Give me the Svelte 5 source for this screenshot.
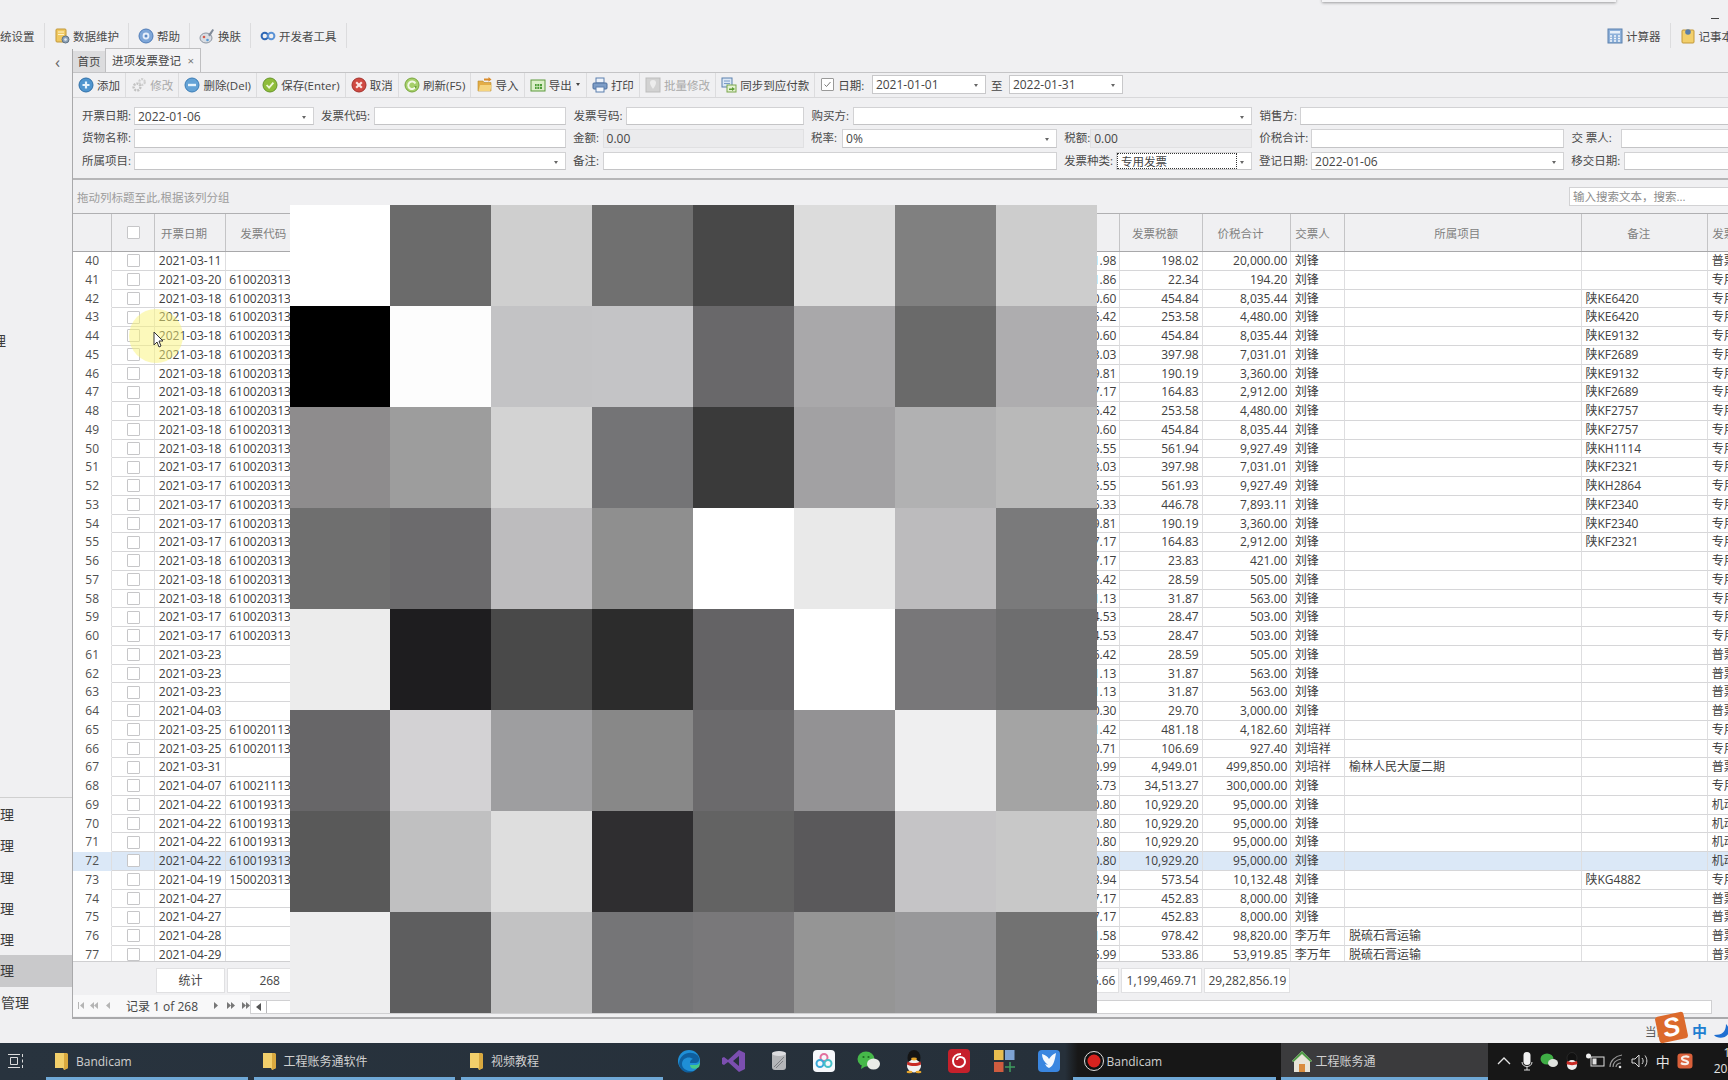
<script>
  const menuLeft = [
    { icon: 'db', label: '数据维护' },
    { icon: 'help', label: '帮助' },
    { icon: 'skin', label: '换肤' },
    { icon: 'dev', label: '开发者工具' }
  ];

  const tools = [
    { icon: 'add', label: '添加' },
    { icon: 'edit', label: '修改', off: true },
    { icon: 'del', label: '删除(Del)' },
    { icon: 'save', label: '保存(Enter)' },
    { icon: 'cancel', label: '取消' },
    { icon: 'refresh', label: '刷新(F5)' },
    { icon: 'import', label: '导入' },
    { icon: 'export', label: '导出', drop: true },
    { icon: 'print', label: '打印' },
    { icon: 'batch', label: '批量修改', off: true },
    { icon: 'sync', label: '同步到应付款' }
  ];

  // label width, input width, value, flags
  const formRows = [
    [
      { label: '开票日期:', lw: 52, w: 179.5, value: '2022-01-06', caret: true },
      { label: '发票代码:', lw: 52.5, w: 192.5 },
      { label: '发票号码:', lw: 52.4, w: 178 },
      { label: '购买方:', lw: 42, w: 398.5, caret: true },
      { label: '销售方:', lw: 41, w: 500 }
    ],
    [
      { label: '货物名称:', lw: 52, w: 431.5 },
      { label: '金额:', lw: 29.6, w: 201, value: '0.00', off: true },
      { label: '税率:', lw: 31, w: 214.6, value: '0%', caret: true },
      { label: '税额:', lw: 26, w: 161.5, value: '0.00', off: true },
      { label: '价税合计:', lw: 52, w: 252.7 },
      { label: '交 票人:', lw: 49.5, w: 200 }
    ],
    [
      { label: '所属项目:', lw: 52, w: 431.5, caret: true },
      { label: '备注:', lw: 29.6, w: 454 },
      { label: '发票种类:', lw: 52, w: 135.5, value: '专用发票', caret: true, focus: true },
      { label: '登记日期:', lw: 52, w: 252.7, value: '2022-01-06', caret: true },
      { label: '移交日期:', lw: 52.5, w: 200 }
    ]
  ];

  const C = '610020313';
  const LF = '刘锋';
  const LP = '刘培祥';
  const LW = '李万年';
  const ZY = '专用发票';
  const PP = '普票';
  const JD = '机动车票';
  // date, code, tax, total, person, project, note, kind, (amount when rounding differs)
  const rows = [
    ['03-11', '', '198.02', '20,000.00', LF, '', '', PP],
    ['03-20', C, '22.34', '194.20', LF, '', '', ZY],
    ['03-18', C, '454.84', '8,035.44', LF, '', '陕KE6420', ZY],
    ['03-18', C, '253.58', '4,480.00', LF, '', '陕KE6420', ZY],
    ['03-18', C, '454.84', '8,035.44', LF, '', '陕KE9132', ZY],
    ['03-18', C, '397.98', '7,031.01', LF, '', '陕KF2689', ZY],
    ['03-18', C, '190.19', '3,360.00', LF, '', '陕KE9132', ZY],
    ['03-18', C, '164.83', '2,912.00', LF, '', '陕KF2689', ZY],
    ['03-18', C, '253.58', '4,480.00', LF, '', '陕KF2757', ZY],
    ['03-18', C, '454.84', '8,035.44', LF, '', '陕KF2757', ZY],
    ['03-18', C, '561.94', '9,927.49', LF, '', '陕KH1114', ZY],
    ['03-17', C, '397.98', '7,031.01', LF, '', '陕KF2321', ZY],
    ['03-17', C, '561.93', '9,927.49', LF, '', '陕KH2864', ZY, '9,365.55'],
    ['03-17', C, '446.78', '7,893.11', LF, '', '陕KF2340', ZY],
    ['03-17', C, '190.19', '3,360.00', LF, '', '陕KF2340', ZY],
    ['03-17', C, '164.83', '2,912.00', LF, '', '陕KF2321', ZY],
    ['03-18', C, '23.83', '421.00', LF, '', '', ZY],
    ['03-18', C, '28.59', '505.00', LF, '', '', ZY, '476.42'],
    ['03-18', C, '31.87', '563.00', LF, '', '', ZY],
    ['03-17', C, '28.47', '503.00', LF, '', '', ZY],
    ['03-17', C, '28.47', '503.00', LF, '', '', ZY],
    ['03-23', '', '28.59', '505.00', LF, '', '', PP, '476.42'],
    ['03-23', '', '31.87', '563.00', LF, '', '', PP],
    ['03-23', '', '31.87', '563.00', LF, '', '', PP],
    ['04-03', '', '29.70', '3,000.00', LF, '', '', PP],
    ['03-25', '610020113', '481.18', '4,182.60', LP, '', '', ZY],
    ['03-25', '610020113', '106.69', '927.40', LP, '', '', ZY],
    ['03-31', '', '4,949.01', '499,850.00', LP, '榆林人民大厦二期', '', PP],
    ['04-07', '610021113', '34,513.27', '300,000.00', LF, '', '', ZY],
    ['04-22', '610019313', '10,929.20', '95,000.00', LF, '', '', JD],
    ['04-22', '610019313', '10,929.20', '95,000.00', LF, '', '', JD],
    ['04-22', '610019313', '10,929.20', '95,000.00', LF, '', '', JD],
    ['04-22', '610019313', '10,929.20', '95,000.00', LF, '', '', JD],
    ['04-19', '150020313', '573.54', '10,132.48', LF, '', '陕KG4882', ZY],
    ['04-27', '', '452.83', '8,000.00', LF, '', '', PP],
    ['04-27', '', '452.83', '8,000.00', LF, '', '', PP],
    ['04-28', '', '978.42', '98,820.00', LW, '脱硫石膏运输', '', PP],
    ['04-29', '', '533.86', '53,919.85', LW, '脱硫石膏运输', '', PP]
  ];

  // 金额 = 价税合计 - 税额
  const num = (s) => Number(s.replace(/,/g, ''));
  const amount = (r) =>
    r[8] ?? (num(r[3]) - num(r[2])).toLocaleString('en-US', { minimumFractionDigits: 2, maximumFractionDigits: 2 });

  const mosaic = [
    '#fff', '#6b6b6b', '#cfcfcf', '#707070', '#484848', '#dcdcdc', '#808080', '#cdcdcd',
    '#000', '#fdfdfd', '#c3c3c5', '#c4c4c6', '#69686a', '#a9a8aa', '#6a6a6a', '#aeadaf',
    '#8e8c8d', '#9d9d9d', '#d3d3d3', '#747476', '#3a3a3a', '#a2a1a3', '#b1b1b2', '#b9b9b9',
    '#6f6f6f', '#6c6b6d', '#bdbcbe', '#8f8f8f', '#fff', '#e9e9e9', '#bcbbbd', '#7a7a7b',
    '#ececec', '#1e1d1f', '#494949', '#2c2c2c', '#646365', '#fff', '#787779', '#6e6e6f',
    '#676668', '#d3d2d4', '#9e9ea0', '#888888', '#6b6a6c', '#939294', '#efeff0', '#a4a4a4',
    '#595959', '#c0c0c1', '#dedede', '#2f2e30', '#636363', '#5a595b', '#c5c4c6', '#c8c8c8',
    '#eeeeef', '#5e5e5f', '#c2c2c3', '#757577', '#79787a', '#959595', '#98989a', '#727272'
  ];

  const sideItems = ['理', '理', '理', '理', '理', '理'];
  const pins = ['edge', 'vs', 'dbs', 'baidu', 'wechat', 'qq', 'netease', 'tiles', 'bird'];
  const tray = ['up', 'mic', 'wechat', 'qq', 'screen', 'wifi', 'sound', 'zh', 'sogou'];
</script>

{#snippet folder()}
  <svg width="15" height="20" viewBox="0 0 15 20">
    <path d="M1 2h11l2 1v14l-4 2-1-2H1z" fill="#f2cf6b" />
    <path d="M10 2h2l2 1v14l-4 2z" fill="#d9a93f" />
  </svg>
{/snippet}

{#snippet icon(name)}
  <svg class="ico" width="16" height="16" viewBox="0 0 16 16">
    {#if name === 'add'}
      <circle cx="8" cy="8" r="7" fill="#4f95cf" stroke="#2f6fa8" />
      <path d="M4.5 8h7M8 4.5v7" stroke="#e6f3fc" stroke-width="2.2" />
    {:else if name === 'edit'}
      <circle cx="6" cy="10" r="3.4" fill="none" stroke="#c2c2c2" stroke-width="2.4" stroke-dasharray="2 1" />
      <circle cx="11" cy="5" r="2.8" fill="none" stroke="#cfcfcf" stroke-width="2.2" stroke-dasharray="2 1" />
    {:else if name === 'del'}
      <circle cx="8" cy="8" r="7" fill="#63a2d6" stroke="#3b7cb5" />
      <path d="M4 8h8" stroke="#e6f3fc" stroke-width="2.4" />
    {:else if name === 'save'}
      <circle cx="8" cy="8" r="7" fill="#8fbd3a" stroke="#66952a" />
      <path d="M4.6 8l2.5 2.6 4.3-5" fill="none" stroke="#eef7d8" stroke-width="1.8" />
    {:else if name === 'cancel'}
      <circle cx="8" cy="8" r="7" fill="#cf4a42" stroke="#a3302b" />
      <path d="M5.2 5.2l5.6 5.6M10.8 5.2l-5.6 5.6" stroke="#fbe6e3" stroke-width="2.2" />
    {:else if name === 'refresh'}
      <circle cx="8" cy="8" r="7" fill="#a6cf6a" stroke="#78a63c" />
      <path d="M11.4 6.4A3.8 3.8 0 1 0 11.6 9.6" fill="none" stroke="#f3f9e6" stroke-width="2" />
      <path d="M12.8 9.4l-2.8-.6 1.8 3z" fill="#5f9a2c" />
    {:else if name === 'import'}
      <path d="M1 4h5l1 1.5h7v8.5H1z" fill="#e3ad47" stroke="#b98a2e" stroke-width=".6" />
      <path d="M1.5 14l1.6-6h11.6l-1.4 6z" fill="#f5d47f" />
      <path d="M7 1.4h4.5V0l3 2.4-3 2.4V3.4H7z" fill="#d98b2b" />
    {:else if name === 'export'}
      <rect x="1" y="3" width="14" height="11" fill="#dcefc9" stroke="#5c9a3d" />
      <rect x="5" y="7" width="7" height="5" fill="#4c9c37" />
      <path d="M7 7v5M9.5 7v5M5 9.5h7" stroke="#dcefc9" stroke-width=".7" />
    {:else if name === 'print'}
      <rect x="4" y="1" width="8" height="5" fill="#eef3fa" stroke="#5b7fae" />
      <rect x="1" y="6" width="14" height="6" rx="1" fill="#7d9dc7" stroke="#4c6e9e" />
      <rect x="4" y="10" width="8" height="5" fill="#f4f7fc" stroke="#5b7fae" />
    {:else if name === 'batch'}
      <rect x="1" y="1" width="14" height="14" fill="#d2d2d2" stroke="#bdbdbd" />
      <path d="M8 3a3 3 0 0 1 3 3c0 2-3 6-3 6S5 8 5 6a3 3 0 0 1 3-3z" fill="#ececec" />
    {:else if name === 'sync'}
      <rect x="1" y="1" width="10" height="9" fill="#dbe7f5" stroke="#5b80ad" />
      <path d="M3 4h6M3 6.500h6" stroke="#7a9cc7" />
      <rect x="6" y="8" width="9" height="7" fill="#e5f2d3" stroke="#7aa64d" />
      <path d="M8 11.500h3V10l3 2-3 2v-1H8z" fill="#5d9c34" />
    {:else if name === 'db'}
      <rect x="2" y="1" width="10" height="13" rx="1" fill="#f0c860" stroke="#c2983a" />
      <path d="M4 4h6M4 6.500h6" stroke="#fff3c9" />
      <circle cx="11.500" cy="11.500" r="3.500" fill="#8fa3b8" stroke="#5e7285" />
      <circle cx="11.500" cy="11.500" r="1.300" fill="#e6edf4" />
    {:else if name === 'help'}
      <circle cx="8" cy="8" r="7" fill="#7ea6d8" stroke="#4f7cb8" />
      <circle cx="8" cy="8" r="3.400" fill="#e6eefa" />
      <circle cx="8" cy="8" r="1.500" fill="#5a88c4" />
    {:else if name === 'skin'}
      <ellipse cx="7" cy="10" rx="6" ry="5" fill="#d9dde3" stroke="#8a93a0" />
      <circle cx="5" cy="9" r="1.300" fill="#d65a4a" />
      <circle cx="8.500" cy="12" r="1.300" fill="#5a9bd6" />
      <path d="M9 7l4.500-6 1.500 1-4 6.500z" fill="#7f8a99" />
    {:else if name === 'dev'}
      <circle cx="4.800" cy="8" r="3.200" fill="none" stroke="#2f68b5" stroke-width="2" />
      <circle cx="11.200" cy="8" r="3.200" fill="none" stroke="#5b93d6" stroke-width="2" />
    {:else if name === 'calc'}
      <rect x="1" y="1" width="14" height="14" fill="#8eb1da" stroke="#5b80ad" />
      <rect x="3" y="3" width="10" height="2.500" fill="#e6eff9" />
      <path d="M3 8h2M7 8h2M11 8h2M3 10.500h2M7 10.500h2M11 10.500h2M3 13h2M7 13h2M11 13h2" stroke="#f3f7fc" stroke-width="1.400" />
    {:else if name === 'note'}
      <rect x="2" y="2" width="12" height="13" rx="1" fill="#f2cf6b" stroke="#c2983a" />
      <circle cx="8" cy="4" r="2.800" fill="#5a7ea8" />
    {/if}
  </svg>
{/snippet}

{#snippet app(name)}
  <svg width="26" height="26" viewBox="0 0 26 26">
    {#if name === 'edge'}
      <circle cx="13" cy="13" r="11" fill="#1f8fd6" />
      <path d="M3 15C4 6 14 2 21 7c3 2 3 8-1 8h-6c0-3 2-4 3-4-3-3-11-2-11 5 0 5 6 8 12 7-6 4-15 0-15-8z" fill="#0f5f9e" />
      <path d="M24 12c0 4-2 5-5 5h-5c0 4 5 5 9 2 1-2 1-5 1-7z" fill="#45c98b" />
    {:else if name === 'vs'}
      <path d="M18 2l6 3v16l-6 3-11-10-4 3-2-1V10l2-1 4 3zM18 8l-6 5 6 5z" fill="#7c4fb0" />
    {:else if name === 'dbs'}
      <rect x="6" y="4" width="14" height="18" rx="3" fill="#b4b6b9" />
      <ellipse cx="13" cy="5.500" rx="7" ry="2.500" fill="#dcdde0" />
      <path d="M8 19l10-10M10 20l7-7" stroke="#7d7f83" />
    {:else if name === 'baidu'}
      <rect x="2" y="2" width="22" height="22" rx="4" fill="#f6f8fb" />
      <circle cx="13" cy="9.500" r="3.500" fill="none" stroke="#e3719f" stroke-width="2" />
      <circle cx="9" cy="15.500" r="3.500" fill="none" stroke="#3ba9d9" stroke-width="2" />
      <circle cx="17" cy="15.500" r="3.500" fill="none" stroke="#47c1c9" stroke-width="2" />
    {:else if name === 'wechat'}
      <ellipse cx="10" cy="11" rx="8.500" ry="7.500" fill="#46b84a" />
      <path d="M6 16l-1 5 5-3z" fill="#46b84a" />
      <ellipse cx="17.500" cy="16" rx="6.500" ry="5.500" fill="#e9ece8" />
      <circle cx="7.500" cy="9" r="1.100" fill="#1d6b22" />
      <circle cx="12.500" cy="9" r="1.100" fill="#1d6b22" />
    {:else if name === 'qq'}
      <ellipse cx="13" cy="10" rx="6.500" ry="8" fill="#141414" />
      <ellipse cx="13" cy="18" rx="7" ry="6.500" fill="#f2f2f2" />
      <path d="M6.500 13.500c4 2 9 2 13 0l.5 3c-4 2-10 2-14 0z" fill="#c92b25" />
      <ellipse cx="13" cy="11" rx="3" ry="1.400" fill="#e8a62b" />
      <ellipse cx="8.500" cy="24" rx="3" ry="1.200" fill="#e8a62b" />
      <ellipse cx="17.500" cy="24" rx="3" ry="1.200" fill="#e8a62b" />
    {:else if name === 'netease'}
      <rect x="2" y="1" width="22" height="24" rx="4" fill="#c6202b" />
      <path d="M15 6c-5 0-8 3-8 7 0 4 3 6 6 6s6-2 6-5-2-5-5-5c-2 0-3 2-3 3" fill="none" stroke="#fff" stroke-width="2" />
    {:else if name === 'tiles'}
      <rect x="3" y="2" width="9.500" height="10" fill="#e9bd4f" />
      <rect x="14" y="2" width="9.500" height="10" fill="#7ea3d3" />
      <rect x="3" y="14" width="9.500" height="10" fill="#cf5c3f" />
      <path d="M19 14v10M14 19h10" stroke="#3f9c5f" stroke-width="1.500" />
    {:else if name === 'bird'}
      <rect x="2" y="2" width="22" height="22" rx="4" fill="#3a86e0" />
      <path d="M6 6c4 1 6 3 7 5 2-3 4-5 7-6-1 6-2 13-7 15-2-1-3-2-4-4l3 1C8 14 6 10 6 6z" fill="#f4f8fd" />
    {/if}
  </svg>
{/snippet}

{#snippet trayIcon(name)}
  {#if name === 'zh'}
    <span class="tray-zh">中</span>
  {:else}
    <svg width="20" height="20" viewBox="0 0 20 20">
      {#if name === 'up'}
        <path d="M4 13l6-6 6 6" fill="none" stroke="#e4e4e4" stroke-width="1.300" />
      {:else if name === 'mic'}
        <rect x="6.500" y="1" width="7" height="13" rx="3.500" fill="#f0f0f0" />
        <path d="M5 11c0 6 10 6 10 0M10 16v3M7 19h6" fill="none" stroke="#e0e0e0" />
      {:else if name === 'wechat'}
        <ellipse cx="8" cy="8" rx="6.500" ry="5.500" fill="#3fae45" />
        <ellipse cx="14" cy="12" rx="5" ry="4" fill="#dfe2de" />
      {:else if name === 'qq'}
        <ellipse cx="10" cy="7" rx="5" ry="5.500" fill="#111" stroke="#444" stroke-width=".4" />
        <ellipse cx="10" cy="14" rx="5" ry="5" fill="#eee" />
        <path d="M5 10c3 1.500 7 1.500 10 0l.5 3c-3 1.500-8 1.500-11 0z" fill="#c92b25" />
      {:else if name === 'screen'}
        <rect x="6" y="6" width="13" height="9" fill="none" stroke="#e0e0e0" />
        <rect x="7.500" y="7.500" width="4" height="6" fill="#e0e0e0" />
        <circle cx="3.500" cy="5" r="2.500" fill="#f0f0f0" />
      {:else if name === 'wifi'}
        <path d="M3 16C3 10 8 5 15 4M6 16c0-4 3-7 8-8M9 16c0-2 2-4 5-4" fill="none" stroke="#9a9a9a" stroke-width="1.200" />
        <circle cx="13" cy="16" r="1.300" fill="#e0e0e0" />
      {:else if name === 'sound'}
        <path d="M2 8h3l4-4v12l-4-4H2z" fill="none" stroke="#dcdcdc" />
        <path d="M12 7c1.500 2 1.500 4 0 6M15 4.500c2.500 3.500 2.500 7.500 0 11" fill="none" stroke="#dcdcdc" />
      {:else if name === 'sogou'}
        <rect x="2.500" y="2.500" width="15" height="15" rx="3" fill="#d9603a" />
        <path d="M14 6.500c-1-1.500-7-1.500-7 1 0 2.500 6 1.500 6 4 0 2-5 2-7 .5" fill="none" stroke="#f7efe9" stroke-width="2.200" />
      {/if}
    </svg>
  {/if}
{/snippet}

<div class="screen">
  <div class="menubar">
    <span class="menu-item clipped">统设置</span>
    {#each menuLeft as m}
      <span class="menu-item">{@render icon(m.icon)}{m.label}</span>
    {/each}
    <span class="menu-spacer"></span>
    <span class="menu-item">{@render icon('calc')}计算器</span>
    <span class="menu-item last">{@render icon('note')}记事本</span>
  </div>

  <div class="body">
    <aside class="sidebar">
      <div class="collapse">‹</div>
      <div class="side-stray">理</div>
      <div class="side-list">
        {#each sideItems as s, i}
          <div class="side-item" class:active={i === 5}>{s}</div>
        {/each}
        <div class="side-item wide">管理</div>
      </div>
    </aside>

    <section class="panel">
      <div class="tabs">
        <span class="tab">首页</span>
        <span class="tab on">进项发票登记<i>×</i></span>
      </div>

      <div class="toolbar">
        {#each tools as t}
          <span class="tool" class:off={t.off}>
            {@render icon(t.icon)}{t.label}{#if t.drop}<b class="drop"></b>{/if}
          </span>
        {/each}
        <span class="date-filter">
          <span class="check small"><svg width="11" height="11" viewBox="0 0 11 11"><path d="M2.500 5.500l2 2 4-4.500" fill="none" stroke="#777" /></svg></span>
          <span class="date-label">日期:</span>
          <span class="date-box">2021-01-01<b class="caret"></b></span>
          <span class="date-to">至</span>
          <span class="date-box">2022-01-31<b class="caret"></b></span>
        </span>
      </div>

      <div class="form">
        {#each formRows as row}
          <div class="form-row">
            {#each row as f}
              <div class="field">
                <span class="field-label" style="width:{f.lw}px">{f.label}</span>
                <span class="field-input" class:off={f.off} style="width:{f.w}px">
                  {#if f.focus}
                    <span class="focus">{f.value}</span>
                  {:else}
                    {f.value ?? ''}
                  {/if}
                  {#if f.caret}<b class="caret"></b>{/if}
                </span>
              </div>
            {/each}
          </div>
        {/each}
      </div>

      <div class="group-bar">
        <span>拖动列标题至此,根据该列分组</span>
        <span class="search">输入搜索文本，搜索...</span>
      </div>

      <div class="grid-row head">
        <span class="c"></span>
        <span class="c chk"><span class="check"></span></span>
        <span class="c">开票日期</span>
        <span class="c">发票代码</span>
        <span class="c"></span>
        <span class="c">发票税额</span>
        <span class="c">价税合计</span>
        <span class="c left">交票人</span>
        <span class="c">所属项目</span>
        <span class="c">备注</span>
        <span class="c left">发票种类</span>
      </div>

      <div class="rows">
        {#each rows as r, i}
          <div class="grid-row line" class:picked={i + 40 === 72}>
            <span class="c no">{i + 40}</span>
            <span class="c chk"><span class="check"></span></span>
            <span class="c">2021-{r[0]}</span>
            <span class="c">{r[1] ? r[1] + '0' : ''}</span>
            <span class="c r">{amount(r)}</span>
            <span class="c r">{r[2]}</span>
            <span class="c r">{r[3]}</span>
            <span class="c">{r[4]}</span>
            <span class="c">{r[5]}</span>
            <span class="c">{r[6]}</span>
            <span class="c">{r[7]}</span>
          </div>
        {/each}
      </div>

      <div class="grid-row totals">
        <span></span>
        <span></span>
        <span class="t mid">统计</span>
        <span class="t mid">268</span>
        <span class="t r">28,083,386.66</span>
        <span class="t r">1,199,469.71</span>
        <span class="t r">29,282,856.19</span>
      </div>

      <div class="nav">
        <div class="pager">
          <span class="arrows">
            <svg width="46" height="9" viewBox="0 0 46 9" fill="#b5b5b5">
              <path d="M0 1h1v7H0zM6 1v7L2 4.500zM16 1v7l-4-3.500zM20 1v7l-4-3.500zM32 1v7l-4-3.500z" />
            </svg>
          </span>
          <span class="rec">记录 1 of 268</span>
          <span class="arrows right">
            <svg width="40" height="9" viewBox="0 0 40 9" fill="#777">
              <path d="M0 1v7l4-3.500zM13 1v7l4-3.500zM17 1v7l4-3.500zM28 1v7l4-3.500zM32 1v7l4-3.500zM37 1h1v7h-1z" />
            </svg>
          </span>
        </div>
        <div class="hscroll">
          <span class="hbtn"><svg width="6" height="8" viewBox="0 0 6 8"><path d="M5 0v8L0 4z" fill="#555" /></svg></span>
        </div>
      </div>
    </section>
  </div>

  <div class="status">
    <span class="status-text">当前</span>
    <span class="ime-zh">中</span>
    <svg class="moon" width="16" height="16" viewBox="0 0 16 16"><path d="M13 1c0 8-4 11-12 11 3 4 13 4 15-3 .5-3-1-6-3-8z" fill="#1f6fd1" /></svg>
  </div>

  <div class="taskbar">
    <span class="start">
      <svg width="16" height="16" viewBox="0 0 16 16" fill="none" stroke="#dcdcdc">
        <path d="M2.500 4.500h7v7h-7zM0 1.500h12M0 14.500h12M14.500 1v3M14.500 6.500v3M14.500 12v3" />
      </svg>
    </span>
    <span class="task">{@render folder()}<em>Bandicam</em></span>
    <span class="task">{@render folder()}<em>工程账务通软件</em></span>
    <span class="task">{@render folder()}<em>视频教程</em></span>
    <span class="pins">
      {#each pins as p}
        <span class="pin">{@render app(p)}</span>
      {/each}
    </span>
    <span class="task rec-task">
      <svg width="22" height="22" viewBox="0 0 22 22"><circle cx="11" cy="11" r="9.500" fill="#111" stroke="#ddd" /><circle cx="11" cy="11" r="6.500" fill="#d8231f" /></svg>
      <em>Bandicam</em>
    </span>
    <span class="task cur-task">
      <svg width="22" height="24" viewBox="0 0 22 24">
        <path d="M1 12L11 2l10 10-2 1v10H3V13z" fill="#e8e4d8" />
        <path d="M1 12L11 2l10 10-1.500 1L11 5 2.500 13z" fill="#4f9c46" />
        <rect x="8" y="15" width="6" height="8" fill="#d98b3d" />
      </svg>
      <em>工程账务通</em>
    </span>
    <span class="tray">
      {#each tray as t}
        <span class="tray-item">{@render trayIcon(t)}</span>
      {/each}
    </span>
    <span class="clock"><span>10:49</span><span>2022/1/6</span></span>
  </div>

  <div class="top-popup"></div>
  <div class="minimize"></div>

  <div class="mosaic">
    {#each mosaic as m}
      <span style="background:{m}"></span>
    {/each}
  </div>

  <div class="cursor-glow"></div>
  <svg class="cursor" width="11" height="17" viewBox="0 0 11 17">
    <path d="M1 1v13l3-3 2 5 2-1-2-5h4z" fill="#fff" stroke="#333" />
  </svg>

  <div class="sogou">S</div>
</div>

<style>
  :global(body) {
    margin: 0;
    background: #f0f0f2;
  }

  .screen {
    position: relative;
    width: 1728px;
    height: 1080px;
    overflow: hidden;
    display: flex;
    flex-direction: column;
    background: #f0f0f2;
    color: #454545;
    font: 11.5px "Open Sans", "Noto Sans CJK SC", sans-serif;
  }

  /* top menu */
  .menubar {
    height: 49px;
    box-sizing: border-box;
    padding-top: 23px;
    display: flex;
    flex: none;
    align-items: flex-start;
  }

  .menu-item {
    display: flex;
    align-items: center;
    gap: 3px;
    height: 25px;
    padding: 0 9px;
    border-right: 1px solid #dcdcde;
    white-space: nowrap;
    color: #4a4a4a;
  }

  .menu-item.clipped {
    padding: 0 9.500px 0 0;
  }

  .menu-item.last {
    border-right: 0;
    margin-right: -14px;
  }

  .menu-spacer {
    flex: 1;
  }

  .ico {
    flex: none;
  }

  .body {
    flex: 1;
    min-height: 0;
    display: flex;
  }

  /* left nav */
  .sidebar {
    width: 72px;
    flex: none;
    overflow: hidden;
    font-size: 14px;
    color: #3c3c3c;
  }

  .collapse {
    height: 26px;
    line-height: 26px;
    text-align: right;
    padding-right: 12px;
    font-size: 17px;
    color: #666;
  }

  .side-stray {
    margin-top: 256px;
    height: 20px;
    line-height: 20px;
    margin-left: -8px;
  }

  .side-list {
    margin-top: 446px;
    border-top: 1px solid #d0d0d0;
    padding-top: 1px;
  }

  .side-item {
    height: 31.300px;
    line-height: 31.300px;
  }

  .side-item.active {
    background: #c9c9cb;
  }

  .side-item.wide {
    padding-left: 1px;
  }

  /* main panel */
  .panel {
    flex: 1;
    min-width: 0;
    display: flex;
    flex-direction: column;
    border-left: 1px solid #a9a9ab;
    border-bottom: 2px solid #a9a9ab;
  }

  .tabs {
    height: 24px;
    flex: none;
    display: flex;
    align-items: flex-end;
    box-sizing: border-box;
    border-bottom: 1px solid #c4c4c6;
  }

  .tab {
    height: 21px;
    line-height: 21px;
    padding: 0 4.500px;
    background: #dcdcde;
    color: #444;
    white-space: nowrap;
  }

  .tab.on {
    height: 24px;
    line-height: 24px;
    width: 96px;
    padding: 0 6px;
    box-sizing: border-box;
    background: #f3f3f5;
    border: 1px solid #bfbfc1;
    border-bottom: 0;
    display: flex;
    justify-content: space-between;
  }

  .tab.on i {
    font-style: normal;
    color: #777;
  }

  .toolbar {
    height: 24.500px;
    flex: none;
    box-sizing: border-box;
    display: flex;
    align-items: center;
    border-bottom: 1px solid #d8d8da;
  }

  .tool {
    display: flex;
    align-items: center;
    gap: 3px;
    height: 100%;
    padding: 0 5.100px;
    border-right: 1px solid #dcdcde;
    white-space: nowrap;
  }

  .tool.off {
    color: #a9a9a9;
  }

  .drop {
    width: 0;
    height: 0;
    margin: 0 1px 0 1px;
    border: 2.500px solid transparent;
    border-top: 3px solid #444;
    border-bottom: 0;
  }

  .date-filter {
    display: flex;
    align-items: center;
    margin-left: 6px;
  }

  .date-label {
    margin: 0 7.500px 0 4px;
  }

  .date-box {
    position: relative;
    width: 114px;
    height: 19px;
    line-height: 18px;
    box-sizing: border-box;
    padding-left: 3px;
    background: #fff;
    border: 1px solid #c8c8ca;
    font-size: 12px;
  }

  .date-to {
    margin: 0 5px;
    width: 13px;
  }

  .caret {
    position: absolute;
    right: 7px;
    top: 8px;
    width: 0;
    height: 0;
    border: 2px solid transparent;
    border-top: 3px solid #666;
    border-bottom: 0;
  }

  /* edit form */
  .form {
    height: 82.500px;
    flex: none;
    box-sizing: border-box;
    padding: 9px 0 0 9px;
    border-bottom: 2px solid #b6b6b8;
  }

  .form-row {
    display: flex;
    height: 18.500px;
    margin-bottom: 4px;
  }

  .field {
    display: flex;
    flex: none;
    margin-right: 7.500px;
  }

  .field-label {
    flex: none;
    line-height: 18px;
    white-space: pre;
    color: #4a4a4a;
  }

  .field-input {
    position: relative;
    flex: none;
    box-sizing: border-box;
    padding-left: 3px;
    background: #fff;
    border: 1px solid #d2d2d4;
    border-bottom-color: #c4c4c6;
    line-height: 17px;
    font-size: 12px;
    white-space: nowrap;
  }

  .field-input.off {
    background: #ebebed;
    border-color: #e0e0e2;
  }

  .focus {
    position: absolute;
    left: 0;
    top: 0;
    bottom: 0;
    width: 120px;
    box-sizing: border-box;
    padding-left: 3px;
    border: 1px dotted #333;
    font-size: 11.500px;
    line-height: 15px;
  }

  .group-bar {
    height: 33px;
    flex: none;
    display: flex;
    align-items: center;
    justify-content: space-between;
    padding-left: 4px;
    color: #9c9c9c;
  }

  .search {
    width: 200px;
    height: 19px;
    margin-right: -41px;
    box-sizing: border-box;
    padding-left: 3px;
    line-height: 17px;
    background: #fff;
    border: 1px solid #d2d2d4;
    color: #8c8c8c;
  }

  /* table */
  .grid-row {
    display: grid;
    grid-template-columns: 39.300px 43px 70.400px 88px 806.800px 82.200px 88.700px 54.100px 236.500px 126.400px 80px;
  }

  .head {
    height: 39px;
    flex: none;
    box-sizing: border-box;
    border-top: 1px solid #b0b0b2;
    border-bottom: 1px solid #a8a8aa;
    color: #808080;
  }

  .head .c {
    display: flex;
    align-items: center;
    justify-content: center;
    padding-right: 12px;
    border-right: 1px solid #c4c4c6;
    box-sizing: border-box;
    white-space: nowrap;
    overflow: hidden;
  }

  .head .c.chk {
    padding-right: 0;
  }

  .head .c.left {
    justify-content: flex-start;
    padding: 0 0 0 4px;
  }

  .rows {
    flex: 1;
    min-height: 0;
    overflow: hidden;
    background: #fff;
    border-bottom: 1px solid #cfcfd1;
  }

  .line {
    height: 18.750px;
    box-sizing: border-box;
    background: #fff;
    font-size: 12px;
    color: #404040;
  }

  .line .c {
    box-sizing: border-box;
    padding: 0 3.500px;
    line-height: 17.700px;
    border-right: 1px solid #dedee0;
    border-bottom: 1px solid #d6d6d8;
    white-space: nowrap;
    overflow: hidden;
  }

  .line .c.no {
    padding: 0;
    text-align: center;
    color: #505050;
    border-bottom-color: transparent;
  }

  .line.picked {
    background: #dbe8f7;
  }

  .c.r {
    text-align: right;
    padding-right: 3px !important;
  }

  .chk {
    display: flex;
    align-items: center;
    justify-content: center;
  }

  .check {
    display: block;
    box-sizing: border-box;
    width: 13px;
    height: 13px;
    background: #fff;
    border: 1px solid #c6c6c8;
    border-radius: 1px;
  }

  .check.small {
    display: flex;
    align-items: center;
    justify-content: center;
    border-color: #999;
  }

  .totals {
    height: 31px;
    flex: none;
    box-sizing: border-box;
    padding-top: 6px;
    font-size: 12px;
    color: #454545;
  }

  .t {
    box-sizing: border-box;
    margin: 0 1px;
    background: #fff;
    border: 1px solid #e0e0e2;
    line-height: 23px;
    white-space: nowrap;
    overflow: hidden;
  }

  .t.mid {
    text-align: center;
  }

  .t.r {
    text-align: right;
    padding-right: 3px;
  }

  .nav {
    height: 24px;
    flex: none;
    display: flex;
    align-items: flex-start;
    font-size: 12px;
  }

  .pager {
    width: 177px;
    height: 21px;
    margin-top: 2px;
    flex: none;
    display: flex;
    align-items: center;
    background: #f8f8f9;
  }

  .arrows {
    display: flex;
    margin-left: 5px;
  }

  .rec {
    margin-left: 2px;
    white-space: nowrap;
  }

  .arrows.right {
    margin-left: 16px;
  }

  .hscroll {
    width: 1461.600px;
    height: 14px;
    margin-top: 7px;
    box-sizing: border-box;
    background: #fff;
    border: 1px solid #d0d0d2;
  }

  .hbtn {
    display: flex;
    align-items: center;
    justify-content: center;
    width: 15px;
    height: 100%;
    border-right: 1px solid #b8b8ba;
  }

  /* status */
  .status {
    height: 23.500px;
    flex: none;
    display: flex;
    align-items: center;
    padding-left: 1645px;
    color: #555;
    white-space: nowrap;
  }

  .ime-zh {
    margin-left: 24px;
    font-size: 15px;
    font-weight: 700;
    color: #1f7fd1;
  }

  .moon {
    margin-left: 6px;
    flex: none;
  }

  /* taskbar */
  .taskbar {
    height: 37.500px;
    flex: none;
    display: flex;
    background: linear-gradient(to right, #28333e 0, #26303a 1065px, #171717 1078px);
    color: #d0d0d0;
    font-size: 12px;
  }

  .start {
    width: 46px;
    flex: none;
    display: flex;
    align-items: center;
    padding-left: 8px;
    box-sizing: border-box;
  }

  .task {
    width: 201.500px;
    flex: none;
    margin-right: 6px;
    box-sizing: border-box;
    padding: 3px 0 0 8px;
    display: flex;
    align-items: center;
    gap: 7px;
    border-bottom: 3px solid #6fa8d6;
    white-space: nowrap;
  }

  .task em {
    font-style: normal;
  }

  .pins {
    display: flex;
    flex: none;
    margin-left: -2.500px;
  }

  .pin {
    width: 45px;
    display: flex;
    align-items: center;
    justify-content: center;
  }

  .rec-task {
    width: 203px;
    margin: 0 5px 0 1.500px;
    padding-left: 10px;
    gap: 2px;
  }

  .cur-task {
    width: 207.500px;
    margin-right: 4.500px;
    background: #3b3b3d;
    padding-left: 10px;
    gap: 3px;
  }

  .tray {
    display: flex;
    flex: none;
  }

  .tray-item {
    width: 22.700px;
    height: 100%;
    display: flex;
    align-items: center;
    justify-content: center;
  }

  .tray-zh {
    font-size: 14px;
    color: #e4e4e4;
  }

  .clock {
    flex: none;
    width: 60px;
    margin-left: 12px;
    display: flex;
    flex-direction: column;
    align-items: center;
    justify-content: center;
    line-height: 16px;
    white-space: nowrap;
    color: #e4e4e4;
  }

  /* overlays */
  .top-popup {
    position: absolute;
    left: 1322px;
    top: -4px;
    width: 294px;
    height: 6px;
    background: #f4f4f6;
    box-shadow: 0 1px 3px rgba(0, 0, 0, 0.35);
  }

  .minimize {
    position: absolute;
    left: 1711px;
    top: 18px;
    width: 8px;
    height: 1px;
    background: #444;
  }

  .mosaic {
    position: absolute;
    left: 289.500px;
    top: 205px;
    display: grid;
    grid-template-columns: repeat(8, 100.900px);
    grid-auto-rows: 101px;
  }

  .cursor-glow {
    position: absolute;
    left: 129px;
    top: 309px;
    width: 54px;
    height: 54px;
    border-radius: 50%;
    background: rgba(250, 244, 120, 0.5);
  }

  .cursor {
    position: absolute;
    left: 153px;
    top: 331px;
  }

  .sogou {
    position: absolute;
    left: 1657px;
    top: 1014px;
    width: 29px;
    height: 27px;
    border-radius: 3px;
    background: #dc6a2c;
    transform: rotate(-12deg);
    text-align: center;
    color: #fff;
    font: italic 700 26px/27px "Liberation Sans", sans-serif;
  }
</style>
